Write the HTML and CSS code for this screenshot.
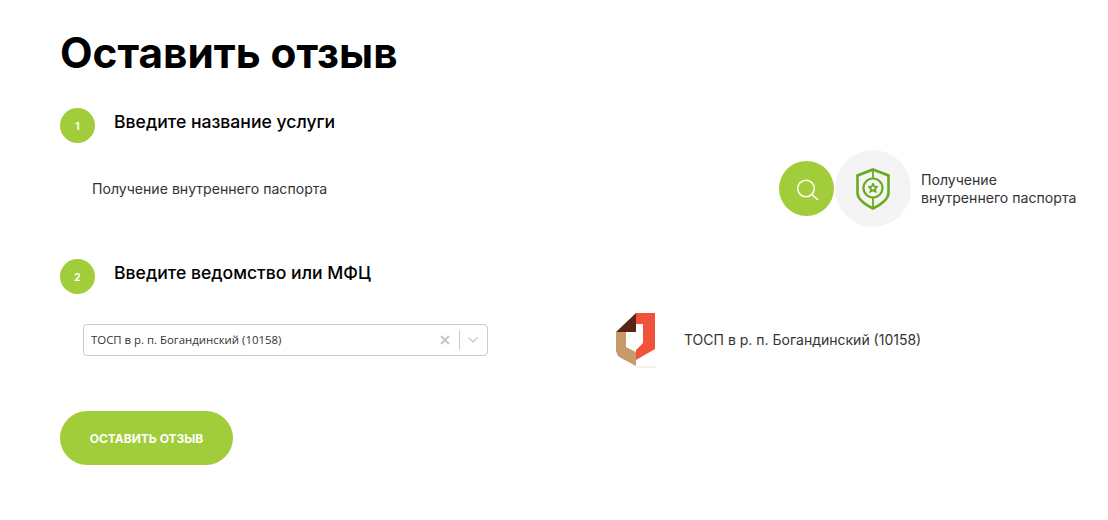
FILE: index.html
```html
<!DOCTYPE html>
<html lang="ru">
<head>
    <meta charset="UTF-8" />
    <title>Оставить отзыв</title>
    <link rel="stylesheet" href="styles.css">
</head>
<body>
    <div class="review">
        <h1>Оставить отзыв</h1>

        <div class="step-head">
            <span class="step-num">1</span>
            <h2>Введите название услуги</h2>
        </div>
        <div class="service-row">
            <p class="service-input">Получение внутреннего паспорта</p>
            <div class="service-card">
                <button class="search-btn" aria-label="Поиск">
                    <svg width="24" height="24" viewBox="0 0 24 24" fill="none" stroke="#fff">
                        <circle cx="11" cy="11.500" r="8.300" stroke-width="1.500"/>
                        <path d="M17 17.500L23 23" stroke-width="1.600"/>
                    </svg>
                </button>
                <div class="service-icon">
                    <svg width="34" height="42" viewBox="0 0 34 42" fill="none" stroke="#6aaa1e">
                        <path d="M17 1.500L32.500 7.500V25C32.500 31.500 25 36.500 17 40.500C9 36.500 1.500 31.500 1.500 25V7.500Z" stroke-width="2.600"/>
                        <path d="M17 1.500V10M17 30V40.500" stroke-width="1.800"/>
                        <circle cx="17" cy="20" r="9.500" stroke-width="2.200"/>
                        <path d="M17 15L18.500 18.200L22 18.600L19.500 21L20.200 24.500L17 22.800L13.800 24.500L14.500 21L12 18.600L15.500 18.200Z" fill="#6aaa1e" stroke="#6aaa1e" stroke-width="1"/>
                        <circle cx="17" cy="20" r="1.500" fill="#f4f4f4" stroke="none"/>
                    </svg>
                </div>
                <p class="service-name">Получение<br>внутреннего паспорта</p>
            </div>
        </div>

        <div class="step-head">
            <span class="step-num">2</span>
            <h2>Введите ведомство или МФЦ</h2>
        </div>
        <div class="office-row">
            <div class="select">
                <span class="select-value">ТОСП в р. п. Богандинский (10158)</span>
                <svg class="select-clear" width="10" height="10" viewBox="0 0 10 10" stroke="#c6c6c6" stroke-width="2">
                    <path d="M1 1L9 9M9 1L1 9"/>
                </svg>
                <span class="select-sep"></span>
                <svg class="select-arrow" width="10" height="6" viewBox="0 0 10 6" fill="none" stroke="#c6c6c6" stroke-width="1.200">
                    <path d="M.5 .5L5 5L9.500 .5"/>
                </svg>
            </div>
            <div class="office-card">
                <svg class="office-logo" width="42" height="56" viewBox="0 0 42 56">
                    <path d="M21 1H40V37L21 48V38L28 31V12H21Z" fill="#f1533a"/>
                    <path d="M21 1V20H1Z" fill="#5a2512"/>
                    <path d="M1 20H11V35L21 40V54L6 46Q1 43 1 38Z" fill="#c79a6c"/>
                    <path d="M21 55H41" stroke="#fbdcd5"/>
                </svg>
                <p class="office-name">ТОСП в р. п. Богандинский (10158)</p>
            </div>
        </div>

        <button class="submit-btn">Оставить отзыв</button>
    </div>
</body>
</html>
```

FILE: styles.css
```css
body {
    margin: 0;
    font-family: Inter, "Noto Sans", sans-serif;
    background: #fff;
    color: #000;
}

.review {
    padding: 27px 0 0 60px;
}

h1 {
    margin: 0 0 29px;
    font-size: 42.300px;
    line-height: 52px;
    font-weight: 700;
}

.step-head {
    display: flex;
    align-items: flex-start;
    gap: 19px;
}

.step-head h2 {
    margin: 0;
    font-size: 17.600px;
    line-height: 28px;
    font-weight: 500;
}

.step-num {
    display: flex;
    justify-content: center;
    align-items: center;
    width: 35px;
    height: 35px;
    border-radius: 50%;
    background: #a2cd3a;
    color: #fff;
    font-size: 10px;
    font-weight: 700;
}

.service-row {
    display: flex;
    justify-content: space-between;
    align-items: center;
    height: 77px;
    margin: 7px 0 32px;
    padding-left: 32px;
}

.service-input {
    margin: 0;
    font-size: 14.100px;
    color: #333;
}

.service-card {
    display: flex;
    align-items: center;
    width: 329px;
}

.search-btn {
    display: flex;
    justify-content: center;
    align-items: center;
    flex: none;
    width: 55px;
    height: 55px;
    margin-right: 1px;
    padding: 0;
    border: none;
    border-radius: 50%;
    background: #a2cd3a;
}

.service-icon {
    display: flex;
    justify-content: center;
    align-items: center;
    flex: none;
    width: 76px;
    height: 77px;
    margin-right: 10px;
    border-radius: 50%;
    background: #f4f4f4;
}

.service-name {
    margin: 0;
    font-size: 14.100px;
    line-height: 18px;
    color: #333;
    white-space: nowrap;
}

.office-row {
    display: flex;
    align-items: center;
    height: 55px;
    margin: 18px 0 44px;
    padding-left: 23px;
}

.select {
    display: flex;
    align-items: center;
    box-sizing: border-box;
    width: 405px;
    height: 32px;
    margin-right: 127px;
    padding: 0 9px 0 7px;
    border: 1px solid #ccc;
    border-radius: 4px;
}

.select-value {
    flex: 1;
    font-family: "Open Sans", sans-serif;
    font-size: 11.400px;
    color: #333;
}

.select-sep {
    width: 1px;
    height: 20px;
    margin: 0 8px 0 9px;
    background: #ccc;
}

.office-card {
    display: flex;
    align-items: center;
    gap: 27px;
}

.office-name {
    margin: 0;
    font-size: 14px;
    color: #333;
}

.submit-btn {
    display: block;
    width: 173px;
    height: 54px;
    padding: 0;
    border: none;
    border-radius: 27px;
    background: #a2cd3a;
    color: #fff;
    font-family: inherit;
    font-size: 12px;
    font-weight: 700;
    text-transform: uppercase;
}
```
